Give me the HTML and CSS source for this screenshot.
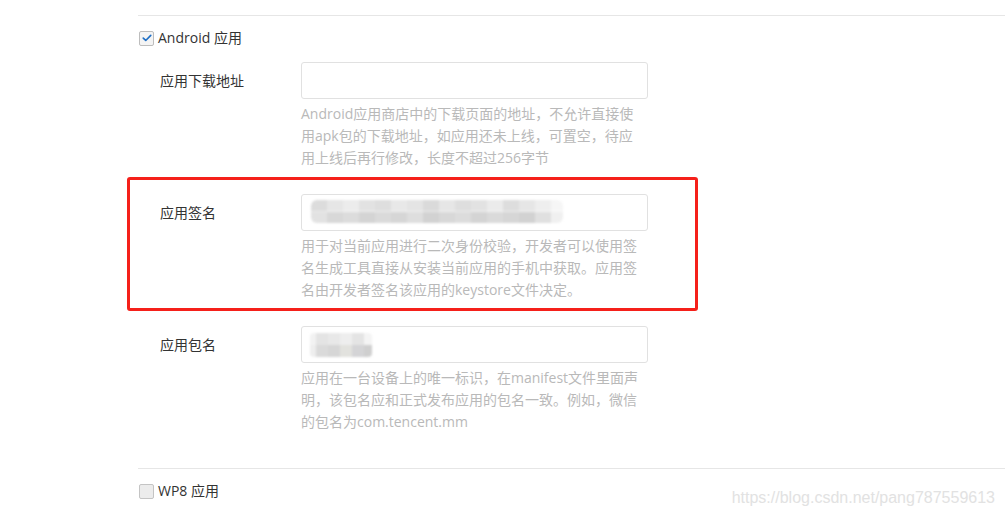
FILE: index.html
```html
<!DOCTYPE html>
<html lang="zh-CN">
<head>
<meta charset="utf-8">
<title>应用配置</title>
<link rel="stylesheet" href="styles.css">
</head>
<body>
<div class="page">
  <section class="section">
    <label class="check-row">
      <span class="checkbox checked">
        <svg viewBox="0 0 16 16" width="12" height="12"><path d="M3 8.2 L6.3 11.3 L13 4.6" fill="none" stroke="#1f6fc5" stroke-width="2.2" stroke-linecap="round" stroke-linejoin="round"/></svg>
      </span>
      <span class="check-text">Android 应用</span>
    </label>

    <div class="field">
      <div class="label">应用下载地址</div>
      <div class="control">
        <div class="input"></div>
        <div class="help">Android应用商店中的下载页面的地址，不允许直接使用apk包的下载地址，如应用还未上线，可置空，待应用上线后再行修改，长度不超过256字节</div>
      </div>
    </div>

    <div class="field marked">
      <div class="label">应用签名</div>
      <div class="control">
        <div class="input"><div class="blur blur-sig"></div></div>
        <div class="help">用于对当前应用进行二次身份校验，开发者可以使用签名生成工具直接从安装当前应用的手机中获取。应用签名由开发者签名该应用的keystore文件决定。</div>
      </div>
      <div class="redbox"></div>
    </div>

    <div class="field last">
      <div class="label">应用包名</div>
      <div class="control">
        <div class="input"><div class="blur blur-pkg"></div></div>
        <div class="help">应用在一台设备上的唯一标识，在manifest文件里面声明，该包名应和正式发布应用的包名一致。例如，微信的包名为com.tencent.mm</div>
      </div>
    </div>
  </section>

  <section class="section">
    <label class="check-row">
      <span class="checkbox"></span>
      <span class="check-text">WP8 应用</span>
    </label>
  </section>
</div>
<div class="watermark">https://blog.csdn.net/pang787559613</div>
</body>
</html>
```

FILE: styles.css
```css
html, body {
  margin: 0;
  padding: 0;
  background: #ffffff;
}

body {
  font-family: "Open Sans", "Noto Sans CJK SC", sans-serif;
  font-size: 14px;
  color: #333333;
  position: relative;
  width: 1005px;
  height: 516px;
  overflow: hidden;
}

.page {
  padding-top: 15px;
  padding-left: 138px;
}

.section {
  border-top: 1px solid #e6e6e6;
}

.check-row {
  display: flex;
  align-items: center;
  gap: 4px;
  padding-top: 14px;
  padding-left: 1px;
  height: 16px;
  line-height: 16px;
}

.checkbox {
  width: 15px;
  height: 15px;
  box-sizing: border-box;
  border: 1px solid #c4c4c4;
  border-radius: 2px;
  background: #ececec;
  display: flex;
  align-items: center;
  justify-content: center;
}

.checkbox.checked {
  background: #f4f4f4;
  border-color: #bdbdbd;
}

.check-text {
  color: #333333;
  font-size: 14px;
}

.field {
  display: grid;
  grid-template-columns: 141px 347px;
  padding-left: 22px;
  margin-top: 16px;
  margin-bottom: 25px;
  position: relative;
}

.field + .field {
  margin-top: 0;
}

.field.last {
  margin-bottom: 35px;
}

.label {
  line-height: 37px;
  color: #333333;
}

.input {
  height: 37px;
  box-sizing: border-box;
  border: 1px solid #e1e1e1;
  border-radius: 3px;
  background: #ffffff;
  position: relative;
  overflow: hidden;
}

.help {
  width: 340px;
  margin-top: 4px;
  line-height: 22px;
  color: #b9b9b9;
}

.blur {
  position: absolute;
  filter: blur(0.8px);
}

.blur-sig {
  left: 9px;
  top: 5px;
  width: 252px;
  height: 23px;
  border-radius: 6px;
  background:
    linear-gradient(to right,
      #dcdcdc 0 16px, #e6e6e6 16px 32px, #ececec 32px 48px, #e2e2e2 48px 64px,
      #dedede 64px 80px, #e8e8e8 80px 96px, #e4e4e4 96px 112px, #dadada 112px 128px,
      #e6e6e6 128px 144px, #dedede 144px 160px, #e2e2e2 160px 176px, #ebebeb 176px 192px,
      #dddddd 192px 208px, #e6e6e6 208px 224px, #eeeeee 224px 240px, #f6f6f6 240px 252px)
      top left / 100% 50% no-repeat,
    linear-gradient(to right,
      #e2e2e2 0 16px, #d8d8d8 16px 32px, #dcdcdc 32px 48px, #d4d4d4 48px 64px,
      #dadada 64px 80px, #d6d6d6 80px 96px, #dedede 96px 112px, #d2d2d2 112px 128px,
      #d8d8d8 128px 144px, #dcdcdc 144px 160px, #d4d4d4 160px 176px, #dadada 176px 192px,
      #d6d6d6 192px 208px, #d2d2d2 208px 224px, #e0e0e0 224px 240px, #f0f0f0 240px 252px)
      bottom left / 100% 50% no-repeat;
}

.blur-pkg {
  left: 8px;
  top: 6px;
  width: 62px;
  height: 24px;
  border-radius: 4px;
  background:
    linear-gradient(to right,
      #f2f2f2 0 6px, #e4e4e4 6px 18px, #e8e8e8 18px 30px, #eeeeee 30px 42px, #e4e4e4 42px 54px, #f4f4f4 54px 62px)
      top left / 100% 50% no-repeat,
    linear-gradient(to right,
      #eeeeee 0 6px, #dadada 6px 18px, #d6d6d6 18px 30px, #e2e2de 30px 42px, #d4d4d6 42px 54px, #cfcfcf 54px 62px)
      bottom left / 100% 50% no-repeat;
}

.redbox {
  position: absolute;
  left: -11px;
  top: -17px;
  width: 571px;
  height: 134px;
  box-sizing: border-box;
  border: 3px solid #f5201a;
  border-radius: 3px;
  pointer-events: none;
}

.watermark {
  position: absolute;
  right: 10px;
  top: 489px;
  font-family: "Liberation Sans", Arial, sans-serif;
  font-size: 16px;
  line-height: 18px;
  color: #e2e2e2;
}
```
